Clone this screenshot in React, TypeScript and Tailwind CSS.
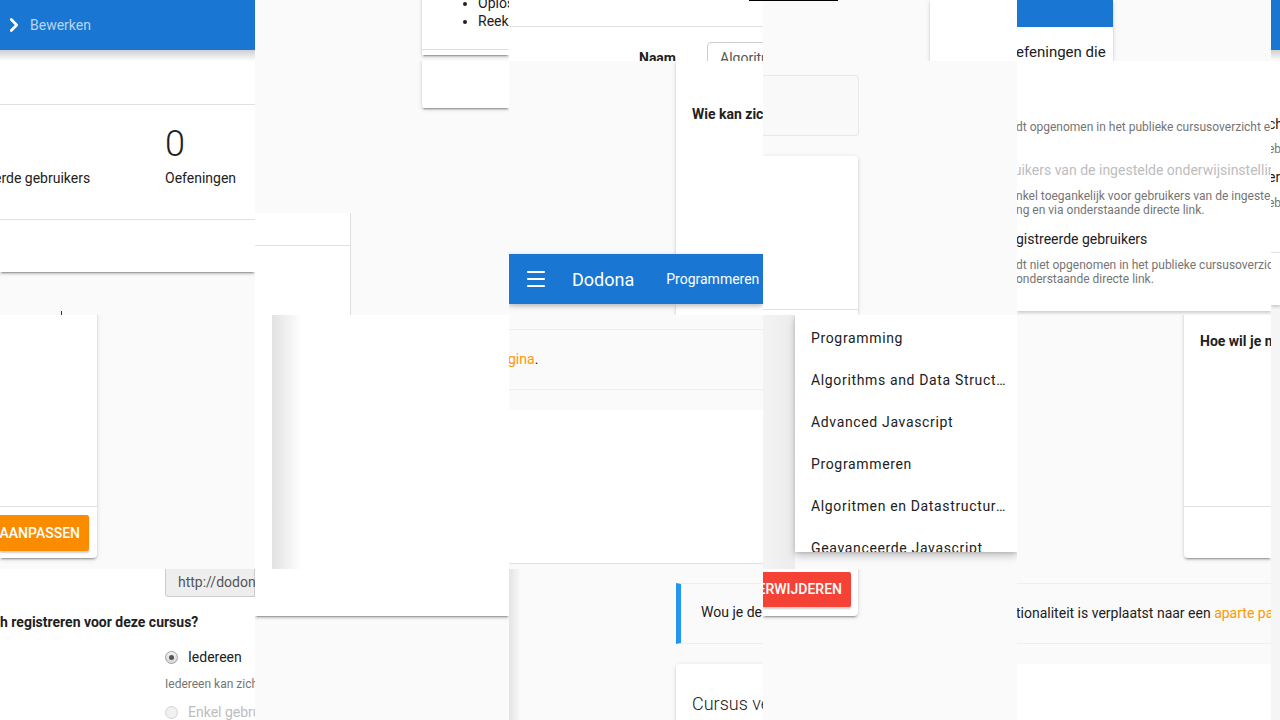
import React from 'react';
import { ChevronRight, Menu } from 'lucide-react';

// material "z-depth 1" card
const card =
  'bg-white shadow-[0_2px_2px_rgba(0,0,0,0.14),0_3px_1px_-2px_rgba(0,0,0,0.2),0_1px_5px_rgba(0,0,0,0.12)]';

const Tile: React.FC<{ className?: string; children?: React.ReactNode }> = ({ className = '', children }) => (
  <div className={`relative overflow-hidden ${className}`}>{children}</div>
);

const RadioOn = () => (
  <span className="flex h-[13px] w-[13px] shrink-0 items-center justify-center rounded-full border border-[#a0a0a0] bg-gradient-to-b from-[#f2f2f2] to-[#d6d6d6]">
    <span className="h-[5px] w-[5px] rounded-full bg-[#555]" />
  </span>
);

const RadioOff = () => (
  <span className="h-[13px] w-[13px] shrink-0 rounded-full border border-[#d4d4d4] bg-[#f0f0f0]" />
);

const menuItems = [
  'Programming',
  'Algorithms and Data Structures',
  'Advanced Javascript',
  'Programmeren',
  'Algoritmen en Datastructuren',
  'Geavanceerde Javascript',
];

export default function App() {
  return (
    <div className="grid h-[720px] w-[1280px] grid-cols-[255px_254px_254px_254px_254px_9px] grid-rows-[61px_254px_254px_151px] overflow-hidden bg-[#fafafa] font-[Roboto,sans-serif] text-[#212121]">
      {/* row 0 */}
      <Tile className="bg-white">
        <div className="flex h-[50px] items-center bg-[#1976d2] pl-[3px]">
          <ChevronRight size={22} strokeWidth={3} className="text-white" />
          <span className="ml-[5px] text-[14px] text-white/70">Bewerken</span>
        </div>
        <div className="h-[11px] bg-gradient-to-b from-[#cfcfcf] to-white" />
      </Tile>

      <Tile className="bg-[#fafafa]">
        <div className={`ml-[167px] h-full ${card}`}>
          <div className="h-[56px] border-b border-[#e0e0e0]">
            <ul className="-mt-[6px] list-disc whitespace-nowrap pl-[56px] text-[14px] leading-[18px]">
              <li>Oplossingen</li>
              <li>Reeksen</li>
            </ul>
          </div>
        </div>
      </Tile>

      <Tile className="bg-white">
        <div className="ml-[240px] h-px bg-black" />
        <div className="h-[26px] border-b border-[#e0e0e0]" />
        <div className="mt-[15px] flex items-start pl-[130px]">
          <span className="mt-[6px] w-[68px] shrink-0 text-[14px] font-bold leading-[20px]">Naam</span>
          <div className="h-[34px] flex-1 whitespace-nowrap rounded-[4px] border border-[#cccccc] pl-[12px] pt-[5px] text-[14px] leading-[20px] text-[#555]">
            Algoritmen en Datastructuren
          </div>
        </div>
      </Tile>

      <Tile className="bg-[#fafafa]">
        <div className="flex h-full items-start">
          <div className="h-px w-[75px] shrink-0 bg-black" />
          <div className={`ml-[92px] h-full flex-1 ${card}`} />
        </div>
      </Tile>

      <Tile className="bg-[#fafafa]">
        <div className={`h-full w-[96px] ${card}`}>
          <div className="h-[27px] bg-[#1976d2]" />
          <div className="-ml-[1px] mt-[15px] whitespace-nowrap text-[15px] leading-[20px]">efeningen die</div>
        </div>
      </Tile>

      <Tile className="bg-white">
        <div className="h-[50px] bg-[#1976d2]" />
        <div className="h-[11px] bg-gradient-to-b from-[#cfcfcf] to-white" />
      </Tile>

      {/* row 1 */}
      <Tile className="bg-[#fafafa]">
        <div className={`h-[211px] ${card}`}>
          <div className="h-[44px] border-b border-[#e0e0e0]" />
          <div className="flex h-[115px] border-b border-[#e0e0e0] text-[14px] leading-[20px]">
            <div className="w-[165px] whitespace-nowrap pt-[63px]">
              <span className="-ml-[6px]">erde gebruikers</span>
            </div>
            <div className="pt-[18px]">
              <div className="text-[36px] font-light leading-[42px]">0</div>
              <div className="mt-[3px]">Oefeningen</div>
            </div>
          </div>
        </div>
        <div className="ml-[61px] mt-[39px] h-[4px] w-px bg-[#333]" />
      </Tile>

      <Tile className="bg-[#fafafa]">
        <div className={`-mt-[4px] ml-[167px] h-[51px] rounded-bl-[2px] ${card}`} />
        <div className="mt-[105px] h-[102px] w-[96px] border-r border-[#e0e0e0] bg-white">
          <div className="h-[33px] border-b border-[#e0e0e0]" />
        </div>
      </Tile>

      <Tile className="bg-[#fafafa]">
        <div className="flex h-[193px]">
          <div className="w-[167px] shrink-0" />
          <div className={`flex-1 whitespace-nowrap pl-[16px] pt-[43px] text-[14px] font-bold leading-[20px] ${card}`}>
            Wie kan zich registreren
          </div>
        </div>
        <div className="relative z-10 flex h-[50px] items-center whitespace-nowrap bg-[#1976d2] pl-[15px] text-white shadow-[0_2px_5px_rgba(0,0,0,0.28)]">
          <Menu size={24} strokeWidth={2.2} />
          <span className="ml-[24px] text-[18px]">Dodona</span>
          <span className="ml-[32px] text-[14px]">Programmeren</span>
        </div>
        <div className="flex h-[11px]">
          <div className="w-[167px] shrink-0" />
          <div className={`flex-1 ${card}`} />
        </div>
      </Tile>

      <Tile className="bg-[#fafafa]">
        <div className="mt-[14px] h-[61px] w-[96px] rounded-r-[4px] border border-l-0 border-[#e8e8e8] bg-[#f9f9f9]" />
        <div className={`mt-[20px] h-[159px] w-[95px] rounded-tr-[3px] ${card}`}>
          <div className="h-[154px] border-b border-[#e0e0e0]" />
        </div>
      </Tile>

      <Tile className="bg-[#fafafa]">
        <div className="h-[250px] whitespace-nowrap bg-white pt-[59px] shadow-[0_2px_3px_rgba(0,0,0,0.18)]">
          <div className="-ml-[1px] text-[12px] leading-[14px] text-[#757575]">dt opgenomen in het publieke cursusoverzicht en</div>
          <div className="-ml-[8px] mt-[26px] text-[14px] leading-[20px] text-[#bdbdbd]">ruikers van de ingestelde onderwijsinstelling</div>
          <div className="-ml-[1px] mt-[9px] text-[12px] leading-[14px] text-[#757575]">nkel toegankelijk voor gebruikers van de ingestelde</div>
          <div className="-ml-[1px] text-[12px] leading-[14px] text-[#757575]">ng en via onderstaande directe link.</div>
          <div className="-ml-[1px] mt-[12px] text-[14px] leading-[20px]">gistreerde gebruikers</div>
          <div className="-ml-[1px] mt-[9px] text-[12px] leading-[14px] text-[#757575]">dt niet opgenomen in het publieke cursusoverzicht</div>
          <div className="-ml-[1px] text-[12px] leading-[14px] text-[#757575]">onderstaande directe link.</div>
        </div>
      </Tile>

      <Tile className="bg-[#f5f5f5]">
        <div className="h-[244px] whitespace-nowrap bg-white pt-[53px] shadow-[0_2px_3px_rgba(0,0,0,0.18)]">
          <div className="-ml-[3px] text-[14px] leading-[20px]">ch</div>
          <div className="-ml-[3px] mt-[8px] text-[12px] leading-[14px] text-[#757575]">eb</div>
          <div className="-ml-[3px] mt-[11px] text-[14px] leading-[20px]">er</div>
          <div className="-ml-[3px] mt-[9px] text-[12px] leading-[14px] text-[#757575]">eb</div>
          <div className="h-[43px] border-b border-[#e0e0e0]" />
        </div>
      </Tile>

      {/* row 2 */}
      <Tile className="bg-[#fafafa]">
        <div className={`-mt-[4px] h-[247px] w-[97px] rounded-br-[4px] ${card}`}>
          <div className="h-[196px] border-b border-[#e0e0e0]" />
          <div className="mt-[8px] flex h-[36px] w-[89px] items-center justify-end overflow-hidden rounded-r-[2px] bg-[#fb8c00] pr-[9px] text-[14px] font-medium text-white shadow-[0_2px_2px_rgba(0,0,0,0.2)]">
            <span className="whitespace-nowrap">AANPASSEN</span>
          </div>
        </div>
      </Tile>

      <Tile className="bg-white">
        <div className="flex h-full">
          <div className="w-[17px] shrink-0" />
          <div className="w-[30px] shrink-0 bg-gradient-to-r from-[#e2e2e2] to-white" />
        </div>
      </Tile>

      <Tile className="bg-[#fafafa]">
        <div className="h-[15px] border-b border-[#eeeeee]" />
        <div className="h-[60px] whitespace-nowrap border-b border-[#eeeeee] pt-[19px] text-[14px] leading-[20px]">
          <span className="-ml-[1px] text-[#ff9800]">gina</span>.
        </div>
        <div className="mt-[20px] h-[154px] border-b border-[#e0e0e0] bg-white" />
      </Tile>

      <Tile className="bg-[#fafafa]">
        <div className="flex h-full items-start">
          <div className="h-full w-[32px] shrink-0 bg-gradient-to-r from-[#f3f3f3] to-[#ececec]" />
          <div className="h-[237px] w-[222px] shrink-0 overflow-hidden bg-white pt-[2px] shadow-[0_4px_8px_rgba(0,0,0,0.22),0_1px_3px_rgba(0,0,0,0.12)]">
            {menuItems.map((item) => (
              <div key={item} className="flex h-[42px] items-center pl-[16px] pr-[10px] text-[14px] tracking-[0.65px]">
                <span className="truncate">{item}</span>
              </div>
            ))}
          </div>
        </div>
      </Tile>

      <Tile className="bg-[#fafafa]">
        <div className={`-mt-[4px] ml-[167px] h-[247px] rounded-bl-[4px] ${card}`}>
          <div className="h-[196px] whitespace-nowrap border-b border-[#e0e0e0] pl-[16px] pt-[20px] text-[14px] font-bold leading-[20px]">
            Hoe wil je nieuwe
          </div>
        </div>
      </Tile>

      <Tile className="bg-[#f5f5f5]" />

      {/* row 3 */}
      <Tile className="bg-white">
        <div className="ml-[165px] flex h-[28px] items-center whitespace-nowrap rounded-bl-[4px] border border-t-0 border-[#cccccc] bg-[#eeeeee] pl-[12px] text-[14px] text-[#555]">
          http://dodona.ugent.be/nl/courses
        </div>
        <div className="mt-[15px] whitespace-nowrap text-[14px] font-bold leading-[20px]">h registreren voor deze cursus?</div>
        <div className="ml-[165px] mt-[15px] flex h-[20px] items-center gap-[10px] whitespace-nowrap text-[14px]">
          <RadioOn />
          <span>Iedereen</span>
        </div>
        <div className="ml-[165px] mt-[10px] whitespace-nowrap text-[12px] leading-[14px] text-[#757575]">Iedereen kan zich registreren</div>
        <div className="ml-[165px] mt-[11px] flex h-[20px] items-center gap-[10px] whitespace-nowrap text-[14px] text-[#bdbdbd]">
          <RadioOff />
          <span>Enkel gebruikers</span>
        </div>
      </Tile>

      <Tile className="bg-[#fafafa]">
        <div className={`-mt-[4px] h-[51px] ${card}`} />
      </Tile>

      <Tile className="bg-[#fafafa]">
        <div className="flex h-full">
          <div className="h-full w-[12px] shrink-0 bg-gradient-to-r from-[#e4e4e4] to-[#fafafa]" />
          <div className="ml-[155px] flex-1">
            <div className="mt-[14px] h-[61px] whitespace-nowrap border-y border-l-[5px] border-[#eeeeee] border-l-[#2196f3] pl-[20px] pt-[18px] text-[14px] leading-[20px]">
              Wou je de
            </div>
            <div className={`mt-[20px] h-[80px] whitespace-nowrap rounded-tl-[4px] pl-[16px] pt-[26px] text-[18px] font-light leading-[28px] ${card}`}>
              Cursus verwijderen
            </div>
          </div>
        </div>
      </Tile>

      <Tile className="bg-[#fafafa]">
        <div className={`-mt-[4px] h-[51px] w-[95px] rounded-br-[4px] pt-[7px] ${card}`}>
          <div className="flex h-[35px] w-[88px] items-center justify-end overflow-hidden rounded-r-[2px] bg-[#f44336] pr-[9px] text-[14px] font-medium text-white shadow-[0_2px_2px_rgba(0,0,0,0.2)]">
            <span className="whitespace-nowrap">VERWIJDEREN</span>
          </div>
        </div>
      </Tile>

      <Tile className="bg-[#fafafa]">
        <div className="mt-[14px] h-[61px] whitespace-nowrap border-y border-[#eeeeee] pt-[19px] text-[14px] leading-[20px]">
          <span className="-ml-[1px]">tionaliteit is verplaatst naar een </span>
          <span className="text-[#ff9800]">aparte pagina</span>.
        </div>
        <div className="mt-[20px] h-[80px] bg-white" />
      </Tile>

      <Tile className="bg-[#f5f5f5]" />
    </div>
  );
}
